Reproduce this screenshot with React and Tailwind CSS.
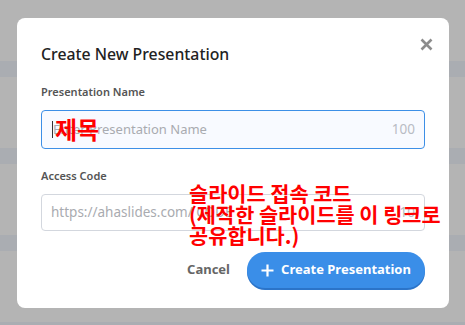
import React from "react";

export default function App() {
  const band = "h-[16px] bg-[#aaadb2]";
  return (
    <div className="relative w-[465px] h-[325px] overflow-hidden bg-[#b4b4b4]" style={{ fontFamily: '"Noto Sans", "Noto Sans CJK KR", sans-serif' }}>
      {/* background page */}
      <div className="flex flex-col">
        <div className="h-[61px]" />
        <div className={band} />
        <div className="h-[71px]" />
        <div className={band} />
        <div className="h-[71px]" />
        <div className={band} />
        <div className="h-[71px]" />
        <div className="h-[3px] bg-[#aaadb2]" />
      </div>

      {/* modal */}
      <div className="absolute left-[17px] top-[18px] w-[432px] h-[290px] bg-white rounded-[8px] px-[24px] pt-[25px] flex flex-col">
        <button className="absolute right-[16px] top-[19px] w-[14px] h-[14px] flex items-center justify-center">
          <svg width="13" height="13" viewBox="0 0 13 13">
            <path d="M1.5 1.5 L11.5 11.5 M11.5 1.5 L1.5 11.5" stroke="#8c8c8c" strokeWidth="2.6" strokeLinecap="butt" />
          </svg>
        </button>
        <h2 className="text-[15.8px] leading-[22px] text-[#222] font-medium">Create New Presentation</h2>

        <label className="mt-[19px] text-[11px] leading-[16px] font-semibold text-[#555]">Presentation Name</label>
        <div className="relative mt-[10px] h-[39px] rounded-[4px] border border-[#3d8fe6] bg-[#f8faff] flex items-center pl-[10px] pr-[9px]">
          <span className="w-px h-[17px] bg-[#333]" />
          <span className="text-[13px] text-[#a9abb0] flex-1">Enter Presentation Name</span>
          <span className="text-[13.5px] text-[#b8bcc4]">100</span>
          <span className="absolute left-[13px] top-[4px] text-[24px] leading-[28px] font-bold text-[#ff0000]" style={{ fontFamily: '"Noto Sans CJK KR", sans-serif' }}>제목</span>
        </div>

        <label className="mt-[19px] text-[11px] leading-[16px] font-semibold text-[#555]">Access Code</label>
        <div className="relative mt-[10px] h-[37px] rounded-[4px] border border-[#d3d7de] bg-white flex items-center pl-[9px] pr-[9px]">
          <span className="text-[13.5px] text-[#a9abb0] flex-1">https://ahaslides.com/ CODE</span>
          <span className="text-[13.5px] text-[#b8bcc4]">10</span>
          <div className="absolute left-[147px] top-[-12px] text-[20.8px] leading-[21px] font-bold text-[#ff0000] whitespace-nowrap" style={{ fontFamily: '"Noto Sans CJK KR", sans-serif' }}>
            <div>슬라이드 접속 코드</div>
            <div>(제작한 슬라이드를 이 링크로</div>
            <div>공유합니다.)</div>
          </div>
        </div>

        <div className="mt-[21px] flex items-center justify-end gap-[17px]">
          <span className="text-[13px] font-bold text-[#666]">Cancel</span>
          <button className="h-[36px] w-[178px] rounded-full bg-[#3a8ee8] shadow-[0_2px_0_#2b74c9] flex items-center justify-center gap-[7px] text-white text-[13px] font-bold">
            <svg width="13" height="13" viewBox="0 0 13 13">
              <path d="M6.5 0.5 V12.5 M0.5 6.5 H12.5" stroke="white" strokeWidth="2.2" />
            </svg>
            Create Presentation
          </button>
        </div>
      </div>
    </div>
  );
}
